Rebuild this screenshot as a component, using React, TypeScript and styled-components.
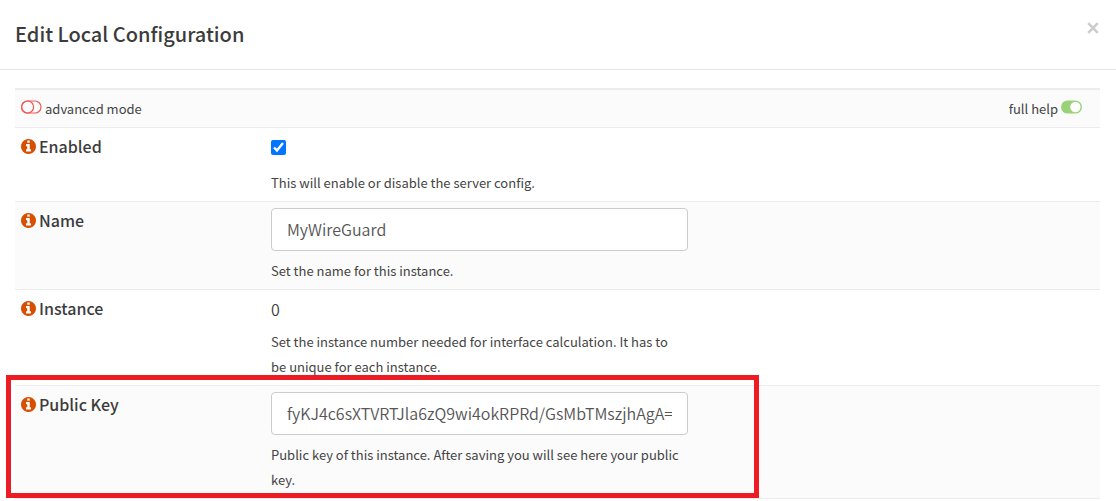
import React from "react";
import styled, { createGlobalStyle } from "styled-components";

const GlobalStyle = createGlobalStyle`
  *, *::before, *::after { box-sizing: border-box; }
  body {
    margin: 0;
    background: #fff;
    color: #3c3c3c;
    font-family: "Source Sans Pro", "Noto Sans CJK SC", sans-serif;
    font-size: 14px;
    line-height: 25px;
  }
`;

const Dialog = styled.main`
  overflow: hidden;
`;

const Header = styled.header`
  display: flex;
  align-items: flex-start;
  justify-content: space-between;
  height: 70px;
  padding: 15px 16px 15px 15px;
  border-bottom: 1px solid #e5e5e5;
`;

const Title = styled.h1`
  margin: 0;
  padding-top: 4px;
  font-size: 20px;
  font-weight: 500;
  line-height: 30px;
`;

const CloseButton = styled.button`
  display: flex;
  margin-top: 7px;
  padding: 0;
  border: 0;
  background: none;
  color: #ccc;
  cursor: pointer;
`;

const Form = styled.form`
  margin: 18px 16px 0 15px;
  border-top: 2px solid #ececec;
`;

const Toolbar = styled.div`
  display: flex;
  justify-content: space-between;
  padding: 6px 18px 6px 6px;
  border-bottom: 1px solid #ececec;
  background: #fbfbfb;
`;

const ToggleButton = styled.button`
  display: flex;
  align-items: center;
  gap: 3px;
  padding: 0;
  border: 0;
  background: none;
  color: inherit;
  font: inherit;
  cursor: pointer;
`;

const ToggleIcon = styled.svg`
  width: 21px;
  height: 14px;
  margin-bottom: 3px;
`;

const Row = styled.div<{ $striped?: boolean }>`
  position: relative;
  display: grid;
  grid-template-columns: 250fr 429fr 406fr;
  border-bottom: 1px solid #ececec;
  background: ${(p) => (p.$striped ? "#fbfbfb" : "#fff")};
`;

const LabelCell = styled.div`
  display: flex;
  align-items: center;
  align-self: start;
  gap: 3px;
  padding: 6px;
  color: #d94f00;
`;

const Label = styled.label`
  color: #3c3c3c;
  font-size: 16px;
  font-weight: 500;
  line-height: 24px;
`;

const ControlCell = styled.div`
  display: flex;
  flex-direction: column;
  align-items: flex-start;
  gap: 7px;
  padding: 6px;
`;

const TextInput = styled.input`
  width: 100%;
  height: 43px;
  padding: 0 15px 2px;
  border: 1px solid #ccc;
  border-radius: 4px;
  background: #fff;
  color: #555;
  font-family: inherit;
  font-size: 16px;
  font-weight: 350;
`;

const CheckLine = styled.div`
  height: 29px;
  padding-top: 6px;
  line-height: 0;
`;

const Checkbox = styled.input`
  width: 15px;
  height: 15px;
  margin: 0;
  accent-color: #0075ff;
`;

const Value = styled.output`
  font-size: 16px;
  font-weight: 350;
  line-height: 26px;
`;

const Help = styled.small`
  color: #444;
  font-size: 13px;
`;

const FieldHelp = styled(Help)`
  padding-right: 5px;
`;

const Highlight = styled.div`
  position: absolute;
  top: -11px;
  bottom: 0;
  left: -9px;
  width: 69.4%;
  border: 5px solid #ed1c24;
  pointer-events: none;
`;

const InfoIcon = () => (
  <svg width="15" height="15" viewBox="128 128 1536 1536" fill="currentColor" aria-hidden="true">
    <path d="M1152 1376v-160q0-14-9-23t-23-9h-96v-512q0-14-9-23t-23-9h-320q-14 0-23 9t-9 23v160q0 14 9 23t23 9h96v320h-96q-14 0-23 9t-9 23v160q0 14 9 23t23 9h448q14 0 23-9t9-23zm-128-896v-160q0-14-9-23t-23-9h-192q-14 0-23 9t-9 23v160q0 14 9 23t23 9h192q14 0 23-9t9-23zm640 416q0 209-103 385.5t-279.5 279.5-385.5 103-385.5-103-279.5-279.5-103-385.5 103-385.5 279.5-279.5 385.5-103 385.5 103 279.5 279.5 103 385.5z" />
  </svg>
);

const ToggleOff = () => (
  <ToggleIcon viewBox="0 0 21 14" fill="none" stroke="#f05a5a" strokeWidth="1.2" aria-hidden="true">
    <rect x="0.6" y="1" width="19.4" height="12" rx="6" />
    <circle cx="6.6" cy="7" r="6" />
  </ToggleIcon>
);

const ToggleOn = () => (
  <ToggleIcon viewBox="0 0 21 14" aria-hidden="true">
    <rect y="0.4" width="21" height="13.2" rx="6.6" fill="#9bd277" />
    <circle cx="14.4" cy="7" r="5.2" fill="#fff" />
  </ToggleIcon>
);

const Field = ({ id, label, help, striped, highlighted, children }: {
  id: string;
  label: string;
  help: string;
  striped?: boolean;
  highlighted?: boolean;
  children: React.ReactNode;
}) => (
  <Row $striped={striped}>
    <LabelCell>
      <InfoIcon />
      <Label htmlFor={id}>{label}</Label>
    </LabelCell>
    <ControlCell>
      {children}
      <FieldHelp>{help}</FieldHelp>
    </ControlCell>
    {highlighted && <Highlight />}
  </Row>
);

export default function App() {
  return (
    <>
      <GlobalStyle />
      <Dialog>
        <Header>
          <Title>Edit Local Configuration</Title>
          <CloseButton type="button" aria-label="Close">
            <svg width="14" height="12" viewBox="0 0 14 12" fill="none" stroke="currentColor" strokeWidth="2.6">
              <path d="M2.2 1.2l9.6 9.6M11.8 1.2l-9.6 9.6" />
            </svg>
          </CloseButton>
        </Header>
        <Form>
          <Toolbar>
            <ToggleButton type="button">
              <ToggleOff />
              <Help>advanced mode</Help>
            </ToggleButton>
            <ToggleButton type="button">
              <Help>full help</Help>
              <ToggleOn />
            </ToggleButton>
          </Toolbar>
          <Field id="enabled" label="Enabled" help="This will enable or disable the server config.">
            <CheckLine>
              <Checkbox id="enabled" type="checkbox" defaultChecked />
            </CheckLine>
          </Field>
          <Field id="name" label="Name" help="Set the name for this instance." striped>
            <TextInput id="name" type="text" defaultValue="MyWireGuard" />
          </Field>
          <Field
            id="instance"
            label="Instance"
            help="Set the instance number needed for interface calculation. It has to be unique for each instance."
          >
            <Value id="instance">0</Value>
          </Field>
          <Field
            id="pubkey"
            label="Public Key"
            help="Public key of this instance. After saving you will see here your public key."
            striped
            highlighted
          >
            <TextInput id="pubkey" type="text" defaultValue="fyKJ4c6sXTVRTJla6zQ9wi4okRPRd/GsMbTMszjhAgA=" />
          </Field>
        </Form>
      </Dialog>
    </>
  );
}
